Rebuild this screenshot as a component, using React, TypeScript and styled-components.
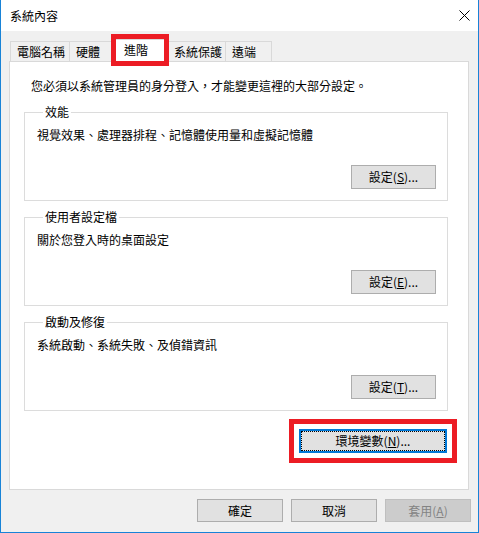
import React from "react";
import styled, { createGlobalStyle, css } from "styled-components";

const GlobalStyle = createGlobalStyle`
  html, body { margin: 0; padding: 0; background: #fff; }
  body {
    font-family: "Noto Sans CJK TC", "Noto Sans", "Liberation Sans", sans-serif;
    font-size: 12px;
    color: #000;
  }
  *, *::before, *::after { box-sizing: border-box; }
`;

const Window = styled.div`
  width: 479px;
  height: 533px;
  border: 1px solid #1883d7;
  border-top: none;
  background: #f0f0f0;
  display: flex;
  flex-direction: column;
`;

const TitleBar = styled.div`
  height: 31px;
  flex: none;
  background: #fff;
  display: flex;
  align-items: center;
  justify-content: space-between;
  padding: 0 8px 0 9px;
`;

const TitleText = styled.span`
  line-height: 16px;
`;

const CloseIcon = styled.svg`
  width: 11px;
  height: 11px;
  display: block;
`;

const Body = styled.div`
  flex: 1;
  display: flex;
  flex-direction: column;
  padding: 8px 9px 10px 8px;
`;

const TabRow = styled.div`
  height: 22px;
  display: flex;
  align-items: flex-end;
  padding-left: 1px;
  position: relative;
  z-index: 2;
`;

const Tab = styled.div<{ $w: number; $active?: boolean }>`
  width: ${(p) => p.$w}px;
  height: 20px;
  line-height: 20px;
  padding-left: 6px;
  white-space: nowrap;
  background: #f0f0f0;
  border: 1px solid #d9d9d9;
  border-bottom: none;
  margin-right: -1px;
  ${(p) =>
    p.$active &&
    css`
      position: relative;
      z-index: 3;
      height: 23px;
      line-height: 20px;
      padding-left: 11px;
      padding-bottom: 2px;
      margin: 0 -2px -1px -2px;
      background: #fff;
      &::after {
        content: "";
        position: absolute;
        left: -2px;
        top: -6px;
        width: 58px;
        height: 32px;
        border: 5px solid #ec1c24;
      }
    `}
`;

const Panel = styled.div`
  height: 429px;
  flex: none;
  border: 1px solid #d9d9d9;
  background: #fff;
  padding: 16px 20px 0 14px;
  display: flex;
  flex-direction: column;
`;

const Intro = styled.div`
  margin-left: 7px;
  line-height: 16px;
  white-space: nowrap;
`;

const Group = styled.fieldset`
  margin: 8px 0 0 0;
  padding: 0 11px 11px 12px;
  border: 1px solid #dcdcdc;
  min-width: 0;
  display: flex;
  flex-direction: column;
  &:first-of-type {
    margin-top: 10px;
  }
`;

const Legend = styled.legend`
  margin-left: 6px;
  padding: 0 2px;
  line-height: 16px;
`;

const Desc = styled.div`
  margin-top: 7px;
  line-height: 16px;
  white-space: nowrap;
`;

const Button = styled.button<{ $w: number; $h: number; $disabled?: boolean }>`
  position: relative;
  width: ${(p) => p.$w}px;
  height: ${(p) => p.$h}px;
  padding: 0;
  font: inherit;
  font-size: 12px;
  line-height: 16px;
  color: ${(p) => (p.$disabled ? "#838383" : "#000")};
  background: ${(p) => (p.$disabled ? "#cccccc" : "#e1e1e1")};
  border: 1px solid ${(p) => (p.$disabled ? "#bfbfbf" : "#adadad")};
  border-radius: 0;
  cursor: default;
  u { text-decoration: underline; text-underline-offset: 1px; }
`;

const GroupButton = styled(Button)`
  align-self: flex-end;
  margin-top: 22px;
`;

const EnvButton = styled(Button)`
  align-self: flex-end;
  margin-top: 18px;
  margin-right: 1px;
  border: 2px solid #0078d7;
  outline: 5px solid #ec1c24;
  outline-offset: 5px;
  &::after {
    content: "";
    position: absolute;
    inset: 0;
    border: 1px dotted #000;
  }
`;

const Footer = styled.div`
  margin-top: 9px;
  margin-right: -2px;
  display: flex;
  justify-content: flex-end;
  gap: 8px;
`;

const groups = [
  { title: "效能", desc: "視覺效果、處理器排程、記憶體使用量和虛擬記憶體", key: "S" },
  { title: "使用者設定檔", desc: "關於您登入時的桌面設定", key: "E" },
  { title: "啟動及修復", desc: "系統啟動、系統失敗、及偵錯資訊", key: "T" },
];

const tabs = [
  { label: "電腦名稱", w: 60 },
  { label: "硬體", w: 46 },
  { label: "進階", w: 57, active: true },
  { label: "系統保護", w: 59 },
  { label: "遠端", w: 47 },
];

export default function App() {
  return (
    <>
      <GlobalStyle />
      <Window>
        <TitleBar>
          <TitleText>系統內容</TitleText>
          <CloseIcon viewBox="0 0 11 11">
            <path d="M0.5 0.5 L10.5 10.5 M10.5 0.5 L0.5 10.5" stroke="#000" strokeWidth="1" fill="none" />
          </CloseIcon>
        </TitleBar>
        <Body>
          <TabRow>
            {tabs.map((t) => (
              <Tab key={t.label} $w={t.w} $active={t.active}>
                {t.label}
              </Tab>
            ))}
          </TabRow>
          <Panel>
            <Intro>您必須以系統管理員的身分登入，才能變更這裡的大部分設定。</Intro>
            {groups.map((g) => (
              <Group key={g.title}>
                <Legend>{g.title}</Legend>
                <Desc>{g.desc}</Desc>
                <GroupButton $w={85} $h={24}>
                  設定(<u>{g.key}</u>)...
                </GroupButton>
              </Group>
            ))}
            <EnvButton $w={148} $h={24}>
              環境變數(<u>N</u>)...
            </EnvButton>
          </Panel>
          <Footer>
            <Button $w={86} $h={23}>確定</Button>
            <Button $w={86} $h={23}>取消</Button>
            <Button $w={86} $h={23} $disabled>
              套用(<u>A</u>)
            </Button>
          </Footer>
        </Body>
      </Window>
    </>
  );
}
